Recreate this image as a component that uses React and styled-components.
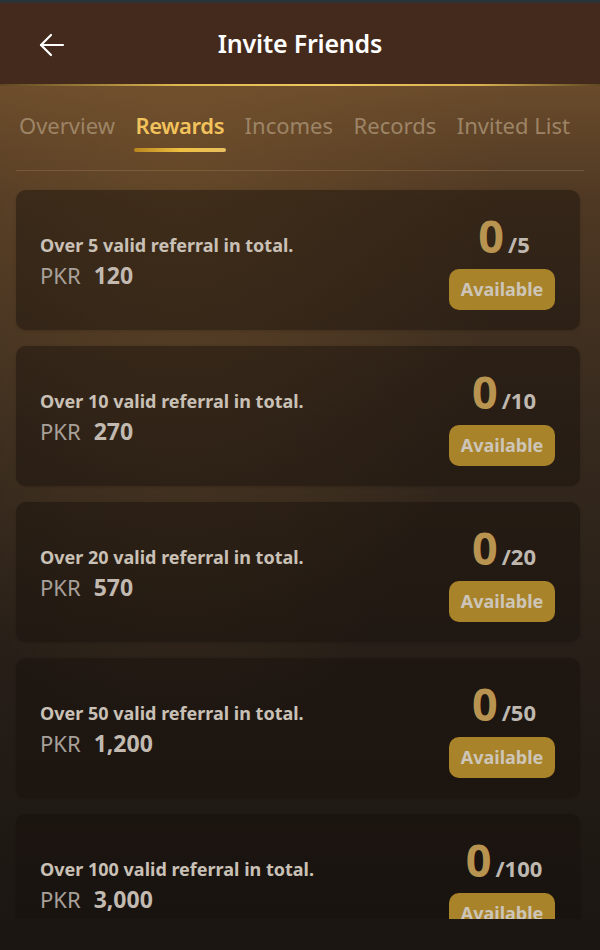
import React from 'react';
import styled, { createGlobalStyle } from 'styled-components';

const GlobalStyle = createGlobalStyle`
    body {
        margin: 0;
        background: #1b1612;
        font-family: "Noto Sans", "Open Sans", sans-serif;
    }
`;

const tabs = ['Overview', 'Rewards', 'Incomes', 'Records', 'Invited List'];

const rewards = [
    { target: 5, amount: '120' },
    { target: 10, amount: '270' },
    { target: 20, amount: '570' },
    { target: 50, amount: '1,200' },
    { target: 100, amount: '3,000' },
];

const BackArrow = () => (
    <svg width="28" height="28" viewBox="0 0 28 28" fill="none" stroke="#ffffff" strokeWidth="2.2" strokeLinecap="round" strokeLinejoin="round">
        <path d="M25 14H3" />
        <path d="M13 4L3 14l10 10" />
    </svg>
);

const App = () => {
    return (
        <>
            <GlobalStyle />
            <Page>
                <TopBar>
                    <BackButton><BackArrow /></BackButton>
                    <Title>Invite Friends</Title>
                </TopBar>
                <GoldLine />
                <Body>
                    <TabBar>
                        {tabs.map((tab) => (
                            <Tab key={tab} active={tab === 'Rewards'}>{tab}</Tab>
                        ))}
                    </TabBar>
                    <Divider />
                    <List>
                        {rewards.map((r) => (
                            <Card key={r.target}>
                                <Info>
                                    <Condition>Over {r.target} valid referral in total.</Condition>
                                    <Amount>
                                        <Currency>PKR</Currency>
                                        <Value>{r.amount}</Value>
                                    </Amount>
                                </Info>
                                <Progress>
                                    <Count>
                                        <Done>0</Done>
                                        <Goal>/{r.target}</Goal>
                                    </Count>
                                    <StatusButton>Available</StatusButton>
                                </Progress>
                            </Card>
                        ))}
                    </List>
                </Body>
                <Footer />
            </Page>
        </>
    );
};

const Page = styled.div`
    width: 600px;
    height: 950px;
    display: flex;
    flex-direction: column;
    overflow: hidden;
    background: #1b1612;
`;

const TopBar = styled.div`
    height: 84px;
    flex-shrink: 0;
    position: relative;
    display: flex;
    align-items: center;
    justify-content: center;
    background: #432a1d;
    border-top: 3px solid #2c3338;
    box-sizing: border-box;
`;

const BackButton = styled.div`
    position: absolute;
    left: 38px;
    top: 28px;
    display: flex;
`;

const Title = styled.h1`
    margin: 0 0 2px;
    font-size: 25px;
    font-weight: 600;
    color: #ffffff;
    letter-spacing: -0.2px;
`;

const GoldLine = styled.div`
    height: 2px;
    flex-shrink: 0;
    background: linear-gradient(90deg, rgba(160, 120, 50, 0.5) 0%, #e0b850 30%, #f0c860 55%, #d8b050 80%, rgba(160, 120, 50, 0.5) 100%);
`;

const Body = styled.div`
    flex: 1;
    min-height: 0;
    display: flex;
    flex-direction: column;
    background:
        radial-gradient(ellipse at 30% 5%, rgba(120, 85, 45, 0.5), transparent 55%),
        linear-gradient(180deg, #6a4b2b 0%, #4e3823 14%, #372a1e 40%, #261e17 70%, #1c1713 100%);
`;

const TabBar = styled.div`
    height: 84px;
    flex-shrink: 0;
    display: flex;
    align-items: flex-start;
    justify-content: space-between;
    padding: 0 30px 0 19px;
    box-sizing: border-box;
`;

const Tab = styled.div`
    position: relative;
    margin-top: 24px;
    font-size: 22px;
    color: ${(p) => (p.active ? '#f2c35c' : '#9d8466')};
    font-weight: ${(p) => (p.active ? 600 : 400)};
    letter-spacing: ${(p) => (p.active ? '-0.4px' : '0')};
    white-space: nowrap;

    &::after {
        content: '';
        display: ${(p) => (p.active ? 'block' : 'none')};
        position: absolute;
        left: -1px;
        right: -2px;
        top: 38px;
        height: 4px;
        border-radius: 2px;
        background: linear-gradient(90deg, #b8861f, #f0c040 50%, #e8c060);
    }
`;

const Divider = styled.div`
    height: 1px;
    margin: 0 16px;
    flex-shrink: 0;
    background: rgba(170, 130, 90, 0.35);
`;

const List = styled.div`
    flex: 1;
    min-height: 0;
    overflow: hidden;
    display: flex;
    flex-direction: column;
    gap: 16px;
    padding: 19px 20px 0 16px;
`;

const Card = styled.div`
    height: 140px;
    flex-shrink: 0;
    display: flex;
    align-items: center;
    justify-content: space-between;
    padding: 0 25px 0 24px;
    border-radius: 10px;
    background: rgba(22, 16, 12, 0.45);
    box-shadow: 0 1px 3px rgba(0, 0, 0, 0.15);
`;

const Info = styled.div`
    display: flex;
    flex-direction: column;
    gap: 2px;
    padding-top: 4px;
`;

const Condition = styled.div`
    font-size: 18px;
    font-weight: 700;
    color: #c9c0b6;
`;

const Amount = styled.div`
    display: flex;
    align-items: baseline;
    gap: 13px;
`;

const Currency = styled.span`
    font-size: 22px;
    color: #a8a09a;
`;

const Value = styled.span`
    font-size: 23px;
    font-weight: 700;
    color: #c2bab1;
`;

const Progress = styled.div`
    display: flex;
    flex-direction: column;
    align-items: center;
    gap: 11px;
    padding-top: 2px;
`;

const Count = styled.div`
    display: flex;
    align-items: baseline;
    gap: 4px;
    line-height: 1;
    padding-left: 4px;
`;

const Done = styled.span`
    font-size: 45px;
    font-weight: 700;
    color: #b89450;
`;

const Goal = styled.span`
    font-size: 22px;
    font-weight: 700;
    color: #bfb8b0;
`;

const StatusButton = styled.div`
    width: 106px;
    height: 41px;
    display: flex;
    align-items: center;
    justify-content: center;
    border-radius: 10px;
    background: #a8832a;
    color: #cdc5b8;
    font-size: 18px;
    font-weight: 700;
`;

const Footer = styled.div`
    height: 31px;
    flex-shrink: 0;
    background: #1b1612;
`;

export default App;
